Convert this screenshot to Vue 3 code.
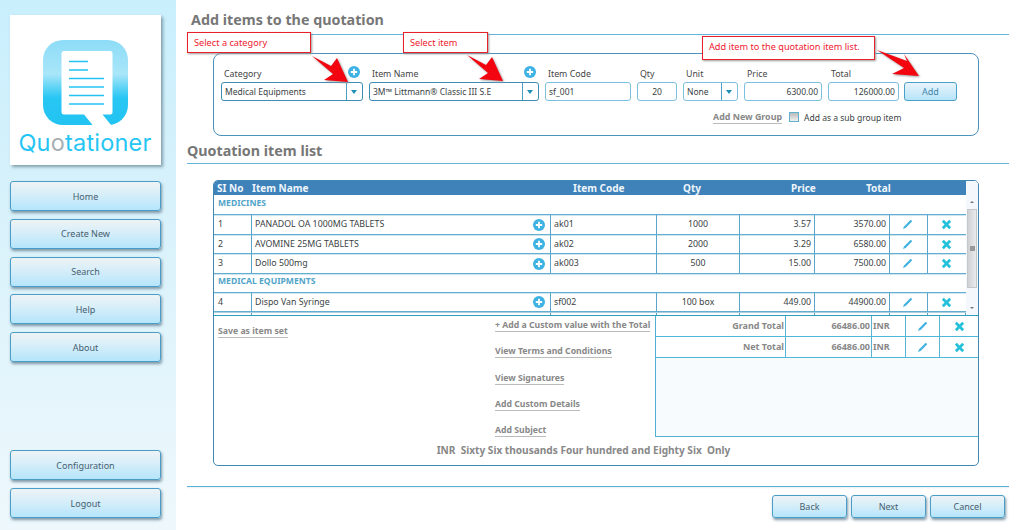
<script setup>
const nav = ['Home', 'Create New', 'Search', 'Help', 'About']
const nav2 = ['Configuration', 'Logout']
const rows = [
  { group: 'MEDICINES' },
  { no: 1, name: 'PANADOL OA 1000MG TABLETS', code: 'ak01', qty: '1000', price: '3.57', total: '3570.00' },
  { no: 2, name: 'AVOMINE 25MG TABLETS', code: 'ak02', qty: '2000', price: '3.29', total: '6580.00' },
  { no: 3, name: 'Dollo 500mg', code: 'ak003', qty: '500', price: '15.00', total: '7500.00' },
  { group: 'MEDICAL EQUIPMENTS' },
  { no: 4, name: 'Dispo Van Syringe', code: 'sf002', qty: '100 box', price: '449.00', total: '44900.00' }
]
const links = ['View Terms and Conditions', 'View Signatures', 'Add Custom Details', 'Add Subject']
const totals = [
  { label: 'Grand Total', value: '66486.00' },
  { label: 'Net Total', value: '66486.00' }
]
</script>

<template>
  <div class="page">
    <aside class="side">
      <div class="logo">
        <svg class="logo-icon" viewBox="0 0 85 85" width="85" height="85">
          <defs>
            <linearGradient id="lg" x1="0" y1="0" x2="0" y2="1">
              <stop offset="0" stop-color="#8ddcf7" />
              <stop offset="0.4" stop-color="#a9e6f9" />
              <stop offset="0.68" stop-color="#28c6f3" />
              <stop offset="1" stop-color="#22c3f2" />
            </linearGradient>
          </defs>
          <rect width="85" height="85" rx="20" fill="url(#lg)" />
          <path d="M20 11h47a2.500 2.500 0 0 1 2.500 2.500v59a2 2 0 0 1-2 2h-8l9 11H50l-9-11H21a2.500 2.500 0 0 1-2.500-2.500V13z" fill="#fff" />
          <path d="M26 21.500h19M26 30h19M26 38.500h35M26 47h35M26 55.500h35M26 64h35" stroke="#22c3f2" stroke-width="1.700" />
        </svg>
        <div class="logo-text">Qu<span>o</span>tationer</div>
      </div>
      <button v-for="n in nav" :key="n" class="btn nav">{{ n }}</button>
      <div class="side-gap"></div>
      <button v-for="n in nav2" :key="n" class="btn nav">{{ n }}</button>
    </aside>

    <main class="main">
      <h1 class="title first">Add items to the quotation</h1>

      <section class="form-box">
        <div class="fields">
          <div class="field f-cat">
            <label>Category</label>
            <div class="input select strong"><span>Medical Equipments</span><i class="arrow"></i></div>
            <svg class="plus form-plus" viewBox="0 0 12 12"><circle cx="6" cy="6" r="6" /><path d="M6 2.800v6.400M2.800 6h6.400" /></svg>
          </div>
          <div class="field f-item">
            <label>Item Name</label>
            <div class="input select strong"><span>3M™ Littmann® Classic III S.E</span><i class="arrow"></i></div>
            <svg class="plus form-plus" viewBox="0 0 12 12"><circle cx="6" cy="6" r="6" /><path d="M6 2.800v6.400M2.800 6h6.400" /></svg>
          </div>
          <div class="field f-code"><label>Item Code</label><div class="input">sf_001</div></div>
          <div class="field f-qty"><label>Qty</label><div class="input center">20</div></div>
          <div class="field f-unit">
            <label>Unit</label>
            <div class="input select"><span>None</span><i class="arrow"></i></div>
          </div>
          <div class="field f-price"><label>Price</label><div class="input right">6300.00</div></div>
          <div class="field f-total"><label>Total</label><div class="input right">126000.00</div></div>
          <button class="btn add">Add</button>
        </div>
        <div class="group-line">
          <a class="link">Add New Group</a>
          <span class="check"></span>
          <span class="check-label">Add as a sub group item</span>
        </div>
      </section>

      <h2 class="title second">Quotation item list</h2>

      <section class="list-box">
        <div class="list">
          <div class="table">
            <div class="thead">
              <span class="h-no">SI No</span><span class="h-name">Item Name</span><span class="h-code">Item Code</span>
              <span class="h-qty">Qty</span><span class="h-price">Price</span><span class="h-total">Total</span>
            </div>
            <template v-for="(r, i) in rows" :key="i">
              <div v-if="r.group" class="group-row">{{ r.group }}</div>
              <div v-else class="row">
                <span class="c">{{ r.no }}</span>
                <span class="c name">{{ r.name }}
                  <svg class="plus" viewBox="0 0 12 12"><circle cx="6" cy="6" r="6" /><path d="M6 2.800v6.400M2.800 6h6.400" /></svg>
                </span>
                <span class="c">{{ r.code }}</span>
                <span class="c center">{{ r.qty }}</span>
                <span class="c right">{{ r.price }}</span>
                <span class="c right">{{ r.total }}</span>
                <span class="c center icon">
                  <svg class="pencil" viewBox="0 0 12 12"><path d="M9.500.800l1.700 1.700-7.300 7.300L1 11l1.200-2.900z" /></svg>
                </span>
                <span class="c center icon">
                  <svg class="cross" viewBox="0 0 12 12"><path d="M2 2l8 8M10 2l-8 8" /></svg>
                </span>
              </div>
            </template>
            <div class="row stub"><span></span><span></span><span></span><span></span><span></span><span></span><span></span><span></span></div>
          </div>
          <div class="scroll">
            <div class="scroll-up"></div>
            <div class="thumb"><i></i></div>
            <div class="scroll-down"></div>
          </div>
        </div>

        <div class="bottom">
          <div class="save-col"><a class="link">Save as item set</a></div>
          <div class="links-col">
            <a class="link">+ Add a Custom value with the Total</a>
            <a v-for="l in links" :key="l" class="link">{{ l }}</a>
          </div>
          <div class="totals">
            <div v-for="t in totals" :key="t.label" class="t-row">
              <span class="t-label">{{ t.label }}</span>
              <span class="t-val">{{ t.value }}</span>
              <span class="t-cur">INR</span>
              <span class="t-ic"><svg class="pencil" viewBox="0 0 12 12"><path d="M9.500.800l1.700 1.700-7.300 7.300L1 11l1.200-2.900z" /></svg></span>
              <span class="t-ic"><svg class="cross" viewBox="0 0 12 12"><path d="M2 2l8 8M10 2l-8 8" /></svg></span>
            </div>
          </div>
        </div>
        <div class="words">INR&nbsp; Sixty Six thousands Four hundred and Eighty Six&nbsp; Only</div>
      </section>

      <footer class="foot">
        <button class="btn f-btn">Back</button>
        <button class="btn f-btn">Next</button>
        <button class="btn f-btn">Cancel</button>
      </footer>

      <div class="callout c1">Select a category</div>
      <div class="callout c2">Select item</div>
      <div class="callout c3">Add item to the quotation item list.</div>
      <svg class="pointer p1" viewBox="0 0 40 30" width="40" height="30"><path d="M2 2l19 10 6-8 11 24-24-2 9-6z" /></svg>
      <svg class="pointer p2" viewBox="0 0 40 30" width="40" height="30"><path d="M2 2l19 10 6-8 11 24-24-2 9-6z" /></svg>
      <svg class="pointer p3" viewBox="0 0 46 30" width="46" height="30"><path d="M1 1l30 11-3-7 15 22-27-2 12-6z" /></svg>
    </main>
  </div>
</template>

<style>
html, body { margin: 0; background: #fff; overflow: hidden; }
</style>

<style scoped>
.page {
  width: 1024px; height: 530px; display: flex; overflow: hidden;
  font-family: "Noto Sans", "Open Sans", sans-serif; font-size: 8.800px; color: #3a3f44;
}
.side {
  width: 176px; flex: none; box-sizing: border-box; padding: 15px 15px 12px 10px;
  display: flex; flex-direction: column; gap: 7.700px;
  background: linear-gradient(#c9effd, #d6f1fb 35%, #eef8fc);
}
.logo {
  height: 150px; background: #fff; box-shadow: 2px 2px 3px #7f9daa; margin-bottom: 8.600px;
  display: flex; flex-direction: column; align-items: center; padding-top: 25px; box-sizing: border-box;
}
.logo-icon { margin-left: -1px; }
.logo-text {
  font-family: "Inter", sans-serif; font-size: 23.500px; line-height: 24px; margin: 6px 0 0 -1px; color: #26c5f4; letter-spacing: 0.200px; font-weight: 400;
}
.logo-text span { color: #a7b0b5; }
.btn {
  font: inherit; font-size: 9px; color: #47606f; border: 1px solid #4a9dc7; border-radius: 3px; padding: 0;
  background: linear-gradient(#eef3f5, #d6eef9 45%, #b5e5fb);
  box-shadow: 1px 2px 3px #7d97a6; box-sizing: border-box;
}
.nav { height: 30px; flex: none; }
.side-gap { flex: 1; }
.main { flex: 1; box-sizing: border-box; padding: 0 15px 0 11px; position: relative; min-width: 0; }
.title { margin: 0; font-size: 14.300px; font-weight: 700; color: #777; border-bottom: 1px solid #63b5d9; box-sizing: border-box; line-height: 18px; }
.first { height: 35px; padding: 11px 0 0 4px; }
.second { height: 28px; padding-top: 6px; }
.form-box {
  margin: 18px 30px 0 26px; height: 83px; box-sizing: border-box; border: 1px solid #4b93ba; border-radius: 8px;
  padding: 15px 0 0 7px;
}
.fields { display: flex; gap: 6px; align-items: flex-end; }
.field { position: relative; display: flex; flex-direction: column; }
.field label { font-size: 8.800px; line-height: 12px; padding-bottom: 2px; padding-left: 3px; color: #444; margin-top: -1px; }
.f-cat { width: 142px; } .f-item { width: 170px; } .f-code { width: 86px; } .f-qty { width: 40px; }
.f-unit { width: 55px; } .f-price { width: 78px; } .f-total { width: 71px; }
.input {
  height: 19px; box-sizing: border-box; border: 1px solid #7cc0df; border-radius: 3px; background: #fff;
  padding: 0 3px; line-height: 17px; font-size: 8.500px; color: #3a3f44; white-space: nowrap;
}
.strong { border-color: #3f8cb5; }
.center { text-align: center; }
.right { text-align: right; }
.select { display: flex; justify-content: space-between; padding-right: 0; }
.arrow {
  width: 15px; flex: none; border-left: 1px solid #4f9dc2; position: relative;
}
.arrow::after {
  content: ""; position: absolute; left: 4px; top: 7px; border: 3.500px solid transparent; border-top: 4px solid #1f8fb8; border-bottom: 0;
}
.plus { width: 12px; height: 12px; flex: none; }
.plus circle { fill: #3db2e3; }
.plus path { stroke: #fff; stroke-width: 1.800; }
.form-plus { position: absolute; right: 3px; top: -3px; }
.add { width: 53px; height: 19px; color: #3e86ad; border-color: #4ba0c9; box-shadow: none; margin-left: -1px; background: linear-gradient(#e9f4fa, #b7e4fa); }
.group-line { display: flex; align-items: center; margin: 9px 0 0 492px; height: 14px; }
.link {
  font-weight: 700; color: #888; border-bottom: 1px solid #bbb; line-height: 12px; font-size: 8.700px; white-space: nowrap;
}
.group-line .link { font-size: 8.900px; }
.check { width: 10px; height: 10px; border: 1px solid #5fb2cf; background: linear-gradient(#bbb, #f0f0f0); box-sizing: border-box; margin: 0 5px 0 7px; }
.check-label { white-space: nowrap; font-size: 8.500px; }
.list-box {
  margin: 16px 30px 0 26px; height: 286px; box-sizing: border-box; border: 1px solid #3e88b2; border-radius: 5px;
  display: flex; flex-direction: column; overflow: hidden;
}
.list { height: 135px; flex: none; display: flex; overflow: hidden; border-bottom: 1px solid #2f9dc4; box-sizing: border-box; }
.table { width: 752px; flex: none; }
.thead {
  height: 14px; background: #3f82ba; color: #eef5fa; font-weight: 700; font-size: 10px; line-height: 14px;
  position: relative; margin-bottom: 1px;
}
.thead span { position: absolute; top: 0; white-space: nowrap; }
.h-no { left: 3px; } .h-name { left: 38px; } .h-code { left: 359px; } .h-qty { left: 469px; } .h-price { left: 577px; } .h-total { left: 652px; }
.group-row {
  height: 19px; box-sizing: border-box; border-bottom: 1px solid #65b0d2; line-height: 15px; padding-left: 4px;
  font-weight: 700; color: #52a5c9; font-size: 8.600px; box-shadow: 0 1px 0 #cfe6f0;
}
.row {
  height: 19.500px; box-sizing: border-box; border-bottom: 1px solid #62aed0; line-height: 19px;
  display: grid; grid-template-columns: 38px 299px 106px 83px 75px 75px 38px 38px; box-shadow: 0 1px 0 #cfe6f0;
}
.c { padding: 0 3px; border-right: 1px solid #5aa6ca; position: relative; white-space: nowrap; }
.c:last-child { border-right: 0; }
.row > .c:first-child { padding-left: 4px; }
.name { display: flex; justify-content: space-between; align-items: center; padding: 0 5px 0 3px; }
.icon { display: flex; align-items: center; justify-content: center; padding: 0 4px 0 2px; }
.pencil { width: 11px; height: 11px; }
.pencil path { fill: #3fb2e0; }
.cross { width: 11px; height: 11px; }
.cross path { stroke: #25c0d9; stroke-width: 3; fill: none; }
.stub { border-bottom: 0; height: 4px; border-top: 1px solid #a9cfe0; box-shadow: none; }
.stub span { border-right: 1px solid #5aa6ca; }
.scroll { flex: 1; display: flex; flex-direction: column; background: #f4f7fb; position: relative; }
.scroll-up, .scroll-down { height: 14px; position: relative; }
.scroll-up { margin-top: 14px; }
.scroll-up::after, .scroll-down::after { content: ""; position: absolute; left: 4px; top: 6px; border: 2px solid transparent; }
.scroll-up::after { border-bottom-color: #777; border-top: 0; }
.scroll-down::after { border-top-color: #777; border-bottom: 0; }
.thumb { height: 79px; margin: 0 1px; background: linear-gradient(90deg, #cfd2d4, #e9eaeb); border: 1px solid #c5c8ca; box-sizing: border-box; display: flex; align-items: center; justify-content: center; }
.thumb i { width: 5px; height: 5px; background: #999; }
.scroll-down { margin-top: auto; }
.bottom { display: flex; height: 121px; flex: none; }
.save-col { box-sizing: border-box; padding: 9px 0 0 4px; flex: none; width: 281px; }
.links-col {
  flex: none; width: 160px; display: flex; flex-direction: column; align-items: flex-start; gap: 13.300px; padding-top: 3px; box-sizing: border-box;
}
.totals { flex: 1; border-left: 1px solid #4fb0d4; background: #f7fbfe; border-bottom: 1px solid #4fb0d4; }
.t-row {
  height: 21px; background: #fff; border-bottom: 1px solid #4fb8d8; box-sizing: border-box;
  display: grid; grid-template-columns: 130px 86px 34px 34px 39px; line-height: 20px; font-weight: 700; color: #888; font-size: 9px;
}
.t-row span { border-right: 1px solid #5bb3d3; box-sizing: border-box; white-space: nowrap; }
.t-row span:last-child { border-right: 0; }
.t-label, .t-val { text-align: right; padding-right: 1px; }
.t-cur { padding-left: 1px; }
.t-ic { display: flex; align-items: center; justify-content: center; }
.words { text-align: center; font-weight: 700; color: #888; font-size: 10.100px; line-height: 16px; margin-top: 5px; padding-right: 25px; }
.foot {
  margin-top: 20px; border-top: 1px solid #52b2da; box-shadow: 0 2px 2px -1px #eee inset; padding: 8px 4px 0 0;
  display: flex; justify-content: flex-end; gap: 4px;
}
.f-btn { width: 75px; height: 23px; }
.callout {
  position: absolute; box-sizing: border-box; border: 1px solid #e8202a; background: #fff; color: #f02030;
  box-shadow: 1px 1px 2px #999; font-size: 9.200px; line-height: 19px; padding-left: 6px; white-space: nowrap;
}
.c1 { left: 11px; top: 32px; width: 124px; height: 21px; }
.c2 { left: 227px; top: 32px; width: 85px; height: 21px; }
.c3 { left: 526px; top: 36px; width: 173px; height: 24px; }
.pointer { position: absolute; filter: drop-shadow(1px 1px 1px #999); }
.pointer path { fill: #f2050f; }
.p1 { left: 134px; top: 54px; }
.p2 { left: 289px; top: 53px; }
.p3 { left: 700px; top: 49px; }
</style>
